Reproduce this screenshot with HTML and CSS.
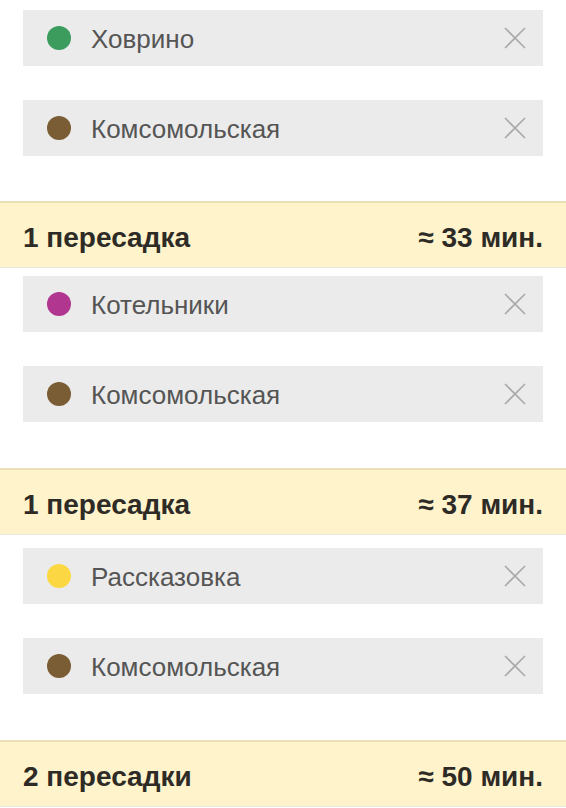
FILE: index.html
```html
<!DOCTYPE html>
<html lang="ru">
<head>
    <meta charset="UTF-8">
    <meta name="viewport" content="width=device-width, initial-scale=1.0">
    <title>Маршруты</title>
    <link rel="stylesheet" href="styles.css">
</head>
<body>
    <div class="routes">
        <ul class="stops stops--first">
            <li class="stop">
                <span class="dot dot--green"></span>
                <span class="stop-name">Ховрино</span>
                <button class="remove" title="Удалить"><svg viewBox="0 0 22 22"><path d="M1 1L21 21M21 1L1 21"/></svg></button>
            </li>
            <li class="stop">
                <span class="dot dot--brown"></span>
                <span class="stop-name">Комсомольская</span>
                <button class="remove" title="Удалить"><svg viewBox="0 0 22 22"><path d="M1 1L21 21M21 1L1 21"/></svg></button>
            </li>
        </ul>

        <div class="summary">
            <span>1 пересадка</span>
            <span>≈ 33 мин.</span>
        </div>
        <ul class="stops">
            <li class="stop">
                <span class="dot dot--purple"></span>
                <span class="stop-name">Котельники</span>
                <button class="remove" title="Удалить"><svg viewBox="0 0 22 22"><path d="M1 1L21 21M21 1L1 21"/></svg></button>
            </li>
            <li class="stop">
                <span class="dot dot--brown"></span>
                <span class="stop-name">Комсомольская</span>
                <button class="remove" title="Удалить"><svg viewBox="0 0 22 22"><path d="M1 1L21 21M21 1L1 21"/></svg></button>
            </li>
        </ul>

        <div class="summary">
            <span>1 пересадка</span>
            <span>≈ 37 мин.</span>
        </div>
        <ul class="stops stops--loose">
            <li class="stop">
                <span class="dot dot--yellow"></span>
                <span class="stop-name">Рассказовка</span>
                <button class="remove" title="Удалить"><svg viewBox="0 0 22 22"><path d="M1 1L21 21M21 1L1 21"/></svg></button>
            </li>
            <li class="stop">
                <span class="dot dot--brown"></span>
                <span class="stop-name">Комсомольская</span>
                <button class="remove" title="Удалить"><svg viewBox="0 0 22 22"><path d="M1 1L21 21M21 1L1 21"/></svg></button>
            </li>
        </ul>

        <div class="summary">
            <span>2 пересадки</span>
            <span>≈ 50 мин.</span>
        </div>
    </div>
</body>
</html>
```

FILE: styles.css
```css
body {
    margin: 0;
    padding: 0;
    background: #ffffff;
    font-family: 'Liberation Sans', Arial, sans-serif;
    overflow: hidden;
}

.stops {
    list-style: none;
    margin: 0;
    padding: 8px 23px 46px;
    display: flex;
    flex-direction: column;
    gap: 34px;
}

.stops--first {
    padding-top: 10px;
    padding-bottom: 45px;
}

.stops--loose {
    padding-top: 13px;
}

.stop {
    height: 56px;
    background: #ebebeb;
    display: flex;
    align-items: center;
    padding: 0 17px 0 24px;
}

.dot {
    width: 24px;
    height: 24px;
    border-radius: 50%;
    flex-shrink: 0;
    margin-right: 20px;
}

.dot--green { background: #3b9c5e; }
.dot--brown { background: #7a5c35; }
.dot--purple { background: #b0368f; }
.dot--yellow { background: #fbd843; }

.stop-name {
    flex: 1;
    padding-top: 3px;
    font-size: 26px;
    color: #555555;
}

.remove {
    border: none;
    background: none;
    padding: 0;
    width: 22px;
    height: 22px;
    cursor: pointer;
}

.remove svg {
    display: block;
    width: 22px;
    height: 22px;
    stroke: #a9a9a9;
    stroke-width: 1.6;
    fill: none;
}

.summary {
    height: 67px;
    box-sizing: border-box;
    background: #fef3cb;
    border-top: 2px solid #eadfb5;
    border-bottom: 1px solid #e9e6dc;
    display: flex;
    justify-content: space-between;
    align-items: center;
    padding: 6px 23px 0;
    font-size: 28px;
    font-weight: bold;
    color: #2e2b26;
}
```
